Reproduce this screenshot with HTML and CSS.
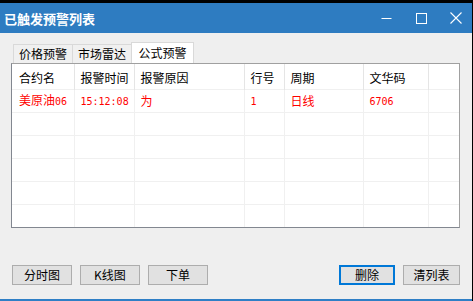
FILE: index.html
```html
<!DOCTYPE html>
<html lang="zh">
<head>
<meta charset="utf-8">
<title>已触发预警列表</title>
<link rel="stylesheet" href="styles.css">
</head>
<body>
<div class="window">
  <div class="titlebar">
    <span class="title">已触发预警列表</span>
    <div class="controls">
      <span class="ctl"><svg width="11" height="11" viewBox="0 0 11 11"><path d="M0.5 5.5H10.5" stroke="#fff" stroke-width="1" fill="none"/></svg></span>
      <span class="ctl"><svg width="11" height="11" viewBox="0 0 11 11"><rect x="0.5" y="0.5" width="10" height="10" stroke="#fff" stroke-width="1" fill="none"/></svg></span>
      <span class="ctl close"><svg width="12" height="12" viewBox="0 0 12 12"><path d="M0.5 0.5L11.5 11.5M11.5 0.5L0.5 11.5" stroke="#fff" stroke-width="1.1" fill="none"/></svg></span>
    </div>
  </div>
  <div class="body">
    <div class="tabs">
      <span class="tab t1">价格预警</span>
      <span class="tab t2">市场雷达</span>
      <span class="tab t3 active">公式预警</span>
    </div>
    <div class="list">
      <table>
        <colgroup>
          <col class="c1"><col class="c2"><col class="c3"><col class="c4"><col class="c5"><col class="c6"><col class="c7">
        </colgroup>
        <thead>
          <tr><th>合约名</th><th>报警时间</th><th>报警原因</th><th>行号</th><th>周期</th><th>文华码</th><th></th></tr>
        </thead>
        <tbody>
          <tr><td class="first">美原油<span class="n">06</span></td><td><span class="n">15:12:08</span></td><td>为</td><td><span class="n">1</span></td><td>日线</td><td><span class="n">6706</span></td><td></td></tr>
          <tr><td></td><td></td><td></td><td></td><td></td><td></td><td></td></tr>
          <tr><td></td><td></td><td></td><td></td><td></td><td></td><td></td></tr>
          <tr><td></td><td></td><td></td><td></td><td></td><td></td><td></td></tr>
          <tr><td></td><td></td><td></td><td></td><td></td><td></td><td></td></tr>
          <tr><td></td><td></td><td></td><td></td><td></td><td></td><td></td></tr>
        </tbody>
      </table>
    </div>
    <div class="actions">
      <div class="group">
        <button class="btn w60">分时图</button>
        <button class="btn w60">K线图</button>
        <button class="btn w60">下单</button>
      </div>
      <div class="group">
        <button class="btn default w56">删除</button>
        <button class="btn w57">清列表</button>
      </div>
    </div>
  </div>
</div>
</body>
</html>
```
FILE: styles.css
```css
* { box-sizing: border-box; margin: 0; padding: 0; }
html, body { width: 473px; height: 301px; overflow: hidden; background: #000; }
body {
  font-family: "Noto Sans CJK SC", "Noto Sans", sans-serif;
  font-size: 12px;
  padding-top: 3px;
  color: #000;
}
.window {
  width: 472px;
  height: 298px;
  display: flex;
  flex-direction: column;
  background: #efefef;
  border-bottom: 2px solid #2f7fc6;
}
.titlebar {
  height: 30px;
  flex: none;
  background: #2e7cc1;
  display: flex;
  align-items: center;
  color: #fff;
}
.title {
  flex: 1;
  padding-left: 4px;
  font-size: 13px;
  font-weight: bold;
  line-height: 16px;
  padding-top: 2px;
}
.controls { display: flex; height: 100%; }
.ctl {
  width: 35px;
  display: flex;
  align-items: center;
  justify-content: center;
}
.ctl svg { display: block; }
.ctl.close { width: 33px; }

.body {
  flex: 1;
  display: flex;
  flex-direction: column;
  padding: 9px 12px 0 11px;
}
.tabs {
  display: flex;
  align-items: flex-end;
  height: 21px;
  padding-left: 2px;
}
.tab {
  height: 19px;
  margin-right: -1px;
  border: 1px solid #d9d9d9;
  border-bottom: none;
  background: #f0f0f0;
  text-align: center;
  line-height: 18px;
}
.t1 { width: 60px; }
.t2 { width: 60px; }
.t3 { width: 63px; }
.tab.active {
  height: 21px;
  background: #fff;
  line-height: 20px;
}

.list {
  height: 165px;
  background: #fff;
  border: 1px solid #a0a0a0;
  border-left-color: #828790;
  border-bottom-color: #828790;
  overflow: hidden;
}
table {
  width: 447px;
  table-layout: fixed;
  border-collapse: collapse;
}
.c1 { width: 62px; }
.c2 { width: 60px; }
.c3 { width: 110px; }
.c4 { width: 40px; }
.c5 { width: 79px; }
.c6 { width: 65px; }
.c7 { width: 31px; }
th {
  height: 25px;
  padding: 3px 0 0 6px;
  font-weight: normal;
  text-align: left;
  border-right: 1px solid #e5e5e5;
  line-height: 16px;
  white-space: nowrap;
}
td {
  height: 23px;
  padding: 0 0 0 6px;
  color: #ff0000;
  border-top: 1px solid #f0f0f0;
  border-right: 1px solid #f0f0f0;
  line-height: 16px;
  white-space: nowrap;
}
th:first-child, td.first { padding-left: 7px; }
th:last-child, td:last-child { border-right: none; }
.n {
  font-family: "DejaVu Sans Mono", "Liberation Mono", monospace;
  font-size: 10px;
}

.actions {
  margin-top: auto;
  margin-bottom: 14px;
  display: flex;
  justify-content: space-between;
  padding-left: 1px;
}
.group { display: flex; gap: 8px; }
.btn {
  height: 20px;
  border: 1px solid #adadad;
  background: #e1e1e1;
  font-family: "Noto Sans CJK SC", "Noto Sans", sans-serif;
  font-size: 12px;
  line-height: 16px;
  color: #000;
}
.btn.default { border: 2px solid #0078d7; }
.w60 { width: 60px; }
.w56 { width: 56px; }
.w57 { width: 57px; }
```
